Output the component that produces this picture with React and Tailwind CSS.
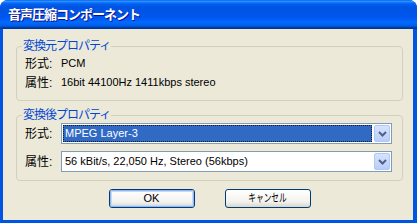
import React from 'react';

const font = { fontFamily: '"Liberation Sans", "Noto Sans CJK JP", sans-serif' };

function Chevron() {
  return (
    <svg width="9" height="6" viewBox="0 0 9 6" fill="none">
      <path d="M1 1l3.5 3.5L8 1" stroke="#4d6185" strokeWidth="2" />
    </svg>
  );
}

function Combo({ children, selected }) {
  return (
    <div className="flex-1 h-[21px] border border-[#7f9db9] bg-white flex items-stretch p-[1px]">
      <div className="flex-1 flex items-center pr-[2px]">
        {selected ? (
          <div className="w-full h-full flex items-center bg-[#316ac5] text-white border border-dotted border-[#1a1a1a] pl-[1px]">
            {children}
          </div>
        ) : (
          <div className="pl-[2px]">{children}</div>
        )}
      </div>
      <div className="w-[16px] rounded-[2px] border border-[#b1c7f5] bg-[linear-gradient(to_bottom,#d6e3fe,#b9cdfa)] flex items-center justify-center">
        <Chevron />
      </div>
    </div>
  );
}

function Group({ title, children, className }) {
  return (
    <fieldset className={`border border-[#d0d0bf] rounded-[4px] pl-[8px] pr-[10px] ${className}`}>
      <legend className="ml-[-3px] px-[1px] text-[12px] leading-[14px] text-[#0046d5] tracking-[-1px]">{title}</legend>
      {children}
    </fieldset>
  );
}

function Button({ children, primary }) {
  return (
    <button className="w-[86px] h-[19px] rounded-[3px] border border-[#003c74] bg-[linear-gradient(to_bottom,#ffffff,#f3f2ee_70%,#d9d5cb)] p-0 flex items-center justify-center">
      <div className={`w-full h-full rounded-[2px] flex items-center justify-center ${primary ? 'border border-[#93b6f2] shadow-[inset_0_0_0_1px_#c6dbfc]' : ''}`}>
        {children}
      </div>
    </button>
  );
}

export default function App() {
  return (
    <div style={font} className="w-[417px] h-[223px] flex flex-col rounded-t-[8px] overflow-hidden bg-[#0054e3] text-black text-[11px]">
      <div className="h-[29px] shrink-0 flex items-center pl-[8px] bg-[linear-gradient(to_bottom,#0058ee_0%,#3593ff_4%,#288eff_6%,#127dff_8%,#036ffc_10%,#0262ee_14%,#0057e5_20%,#0054e3_24%,#0055eb_56%,#005bf5_66%,#026afe_76%,#0062ef_86%,#0052d6_92%,#0040ab_94%,#003092_100%)]">
        <span className="text-white font-bold text-[13px] tracking-[-1px] [text-shadow:1px_1px_#0f1089]">音声圧縮コンポーネント</span>
      </div>
      <div className="flex-1 ml-[3px] mr-[4px] mb-[3px] bg-[#ece9d8] pl-[13px] pr-[10px] pt-[10px] flex flex-col">
        <Group title="変換元プロパティ" className="pt-[1px] pb-[8px]">
          <div className="h-[19px] flex items-center">
            <span className="w-[36px] text-[12px]">形式:</span>
            <span>PCM</span>
          </div>
          <div className="h-[19px] flex items-center">
            <span className="w-[36px] text-[12px]">属性:</span>
            <span>16bit 44100Hz 1411kbps stereo</span>
          </div>
        </Group>
        <Group title="変換後プロパティ" className="mt-[7px] pt-[1px] pb-[8px]">
          <div className="flex items-center">
            <span className="w-[36px] text-[12px]">形式:</span>
            <Combo selected>MPEG Layer-3</Combo>
          </div>
          <div className="flex items-center mt-[7px]">
            <span className="w-[36px] text-[12px]">属性:</span>
            <Combo>56 kBit/s, 22,050 Hz, Stereo (56kbps)</Combo>
          </div>
        </Group>
        <div className="flex justify-center gap-[30px] mt-[8px]">
          <Button primary>OK</Button>
          <Button>
            <span className="inline-block scale-x-[0.7]">キャンセル</span>
          </Button>
        </div>
      </div>
    </div>
  );
}
